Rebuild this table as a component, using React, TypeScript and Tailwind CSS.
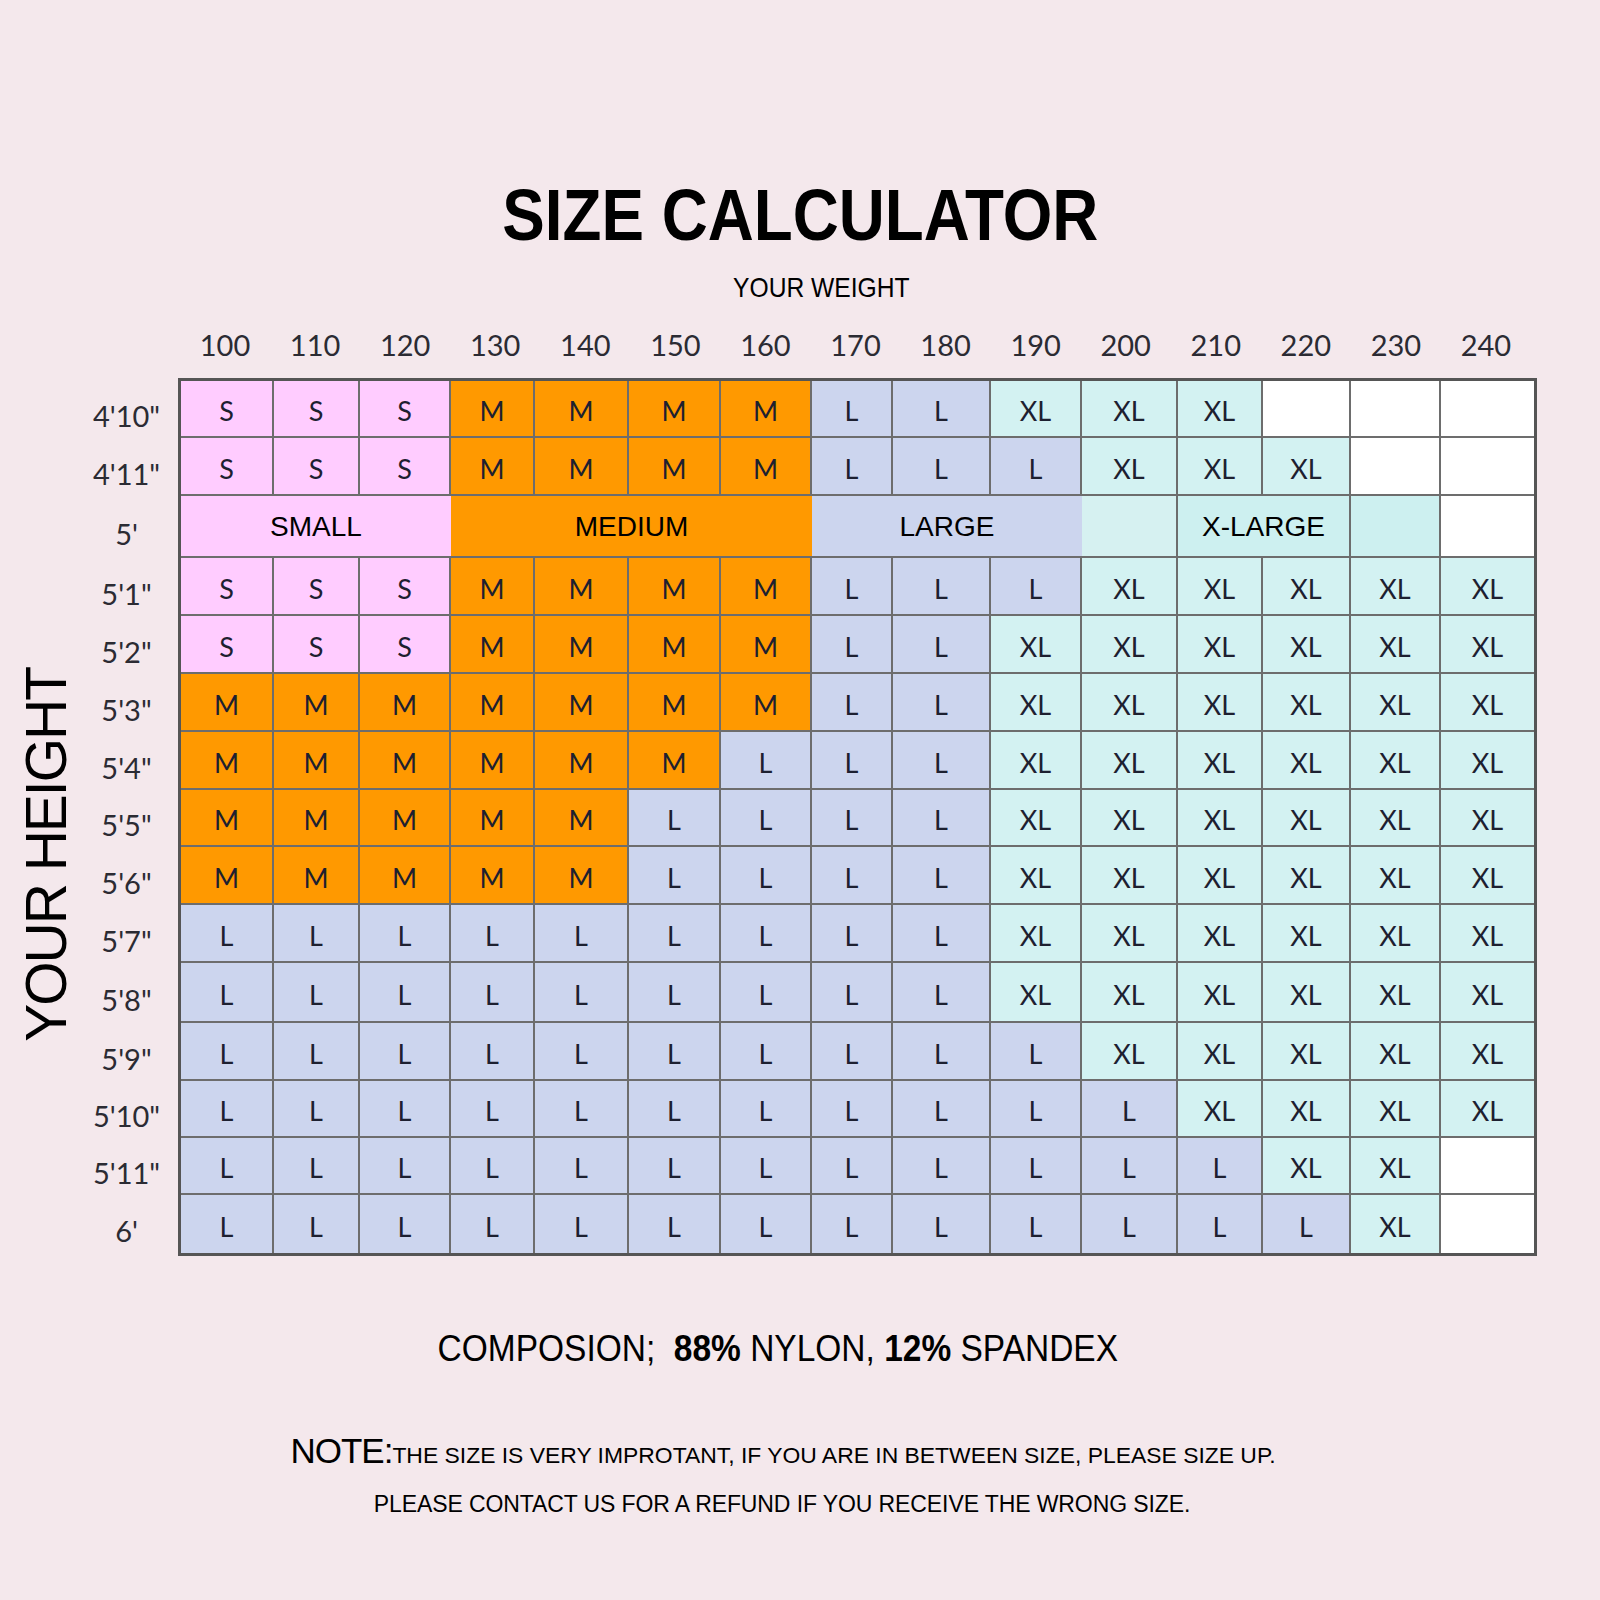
const weights = [100, 110, 120, 130, 140, 150, 160, 170, 180, 190, 200, 210, 220, 230, 240];

// one letter per weight column: S, M, L, X (=XL), _ (empty)
const rows: [string, string | null][] = [
  ["4'10\"", "SSSMMMMLLXXX___"],
  ["4'11\"", "SSSMMMMLLLXXX__"],
  ["5'", null],
  ["5'1\"", "SSSMMMMLLLXXXXX"],
  ["5'2\"", "SSSMMMMLLXXXXXX"],
  ["5'3\"", "MMMMMMMLLXXXXXX"],
  ["5'4\"", "MMMMMMLLLXXXXXX"],
  ["5'5\"", "MMMMMLLLLXXXXXX"],
  ["5'6\"", "MMMMMLLLLXXXXXX"],
  ["5'7\"", "LLLLLLLLLXXXXXX"],
  ["5'8\"", "LLLLLLLLLXXXXXX"],
  ["5'9\"", "LLLLLLLLLLXXXXX"],
  ["5'10\"", "LLLLLLLLLLLXXXX"],
  ["5'11\"", "LLLLLLLLLLLLXX_"],
  ["6'", "LLLLLLLLLLLLLX_"],
];

const fill: Record<string, string> = {
  S: "bg-[#ffccff]",
  M: "bg-[#ff9900]",
  L: "bg-[#ccd5ee]",
  X: "bg-[#d3f2f2]",
  _: "bg-white",
};

const text: Record<string, string> = { S: "S", M: "M", L: "L", X: "XL", _: "" };

const rowTemplate =
  "grid-rows-[57px_58px_62px_58px_58px_58px_58px_57px_58px_58px_60px_58px_57px_57px_58px]";

function BandRow() {
  const band = "flex items-center justify-center border-b-2 border-[#6d6d6d] pt-[2px] text-[28px] leading-none text-black";
  return (
    <>
      <div className={`col-span-3 bg-[#ffccff] ${band}`}>SMALL</div>
      <div className={`col-span-4 bg-[#ff9900] ${band}`}>MEDIUM</div>
      <div className={`col-span-3 bg-[#ccd5ee] ${band}`}>LARGE</div>
      <div className={`border-r-2 bg-[#d6f1f1] ${band}`} />
      <div className={`col-span-2 border-r-2 bg-[#cdf0f0] ${band}`}>X-LARGE</div>
      <div className={`border-r-2 bg-[#cdf0f0] ${band}`} />
      <div className={`bg-white ${band}`} />
    </>
  );
}

function Cell({ code, col, last }: { code: string; col: number; last: boolean }) {
  return (
    <div
      className={`flex items-center justify-center border-[#6d6d6d] pt-[4px] font-['Lato',sans-serif] text-[27px] leading-none text-[#1d2030] ${fill[code]} ${col < 14 ? "border-r-2" : ""} ${last ? "" : "border-b-2"}`}
    >
      {text[code]}
    </div>
  );
}

export default function App() {
  return (
    <div className="min-h-[1600px] w-full bg-[#f4e8ec] pt-[178px] font-['Liberation_Sans',Arial,sans-serif] text-black">
      <h1 className="text-center text-[73px] font-bold leading-none">
        <span className="inline-block scale-x-[0.873]">SIZE CALCULATOR</span>
      </h1>

      <div className="mt-[23px] pl-[42px] text-center text-[28px] leading-none">
        <span className="inline-block scale-x-[0.88]">YOUR WEIGHT</span>
      </div>

      <div className="mt-[28px] flex">
        <div className="w-[180px] shrink-0" />
        <div className="grid w-[1351px] grid-cols-[repeat(15,minmax(0,1fr))] font-['Lato',sans-serif] text-[29px] leading-none text-[#2b2b33]">
          {weights.map((w) => (
            <div key={w} className="text-center">
              {w}
            </div>
          ))}
        </div>
      </div>

      <div className="mt-[19px] flex">
        <div className="flex w-[75px] shrink-0 items-center pl-[18px] pt-[75px]">
          <span className="rotate-180 text-[57px] leading-none tracking-[-2px] [text-orientation:sideways] [writing-mode:vertical-rl]">
            YOUR HEIGHT
          </span>
        </div>

        <div className={`grid w-[103px] shrink-0 pt-[3px] font-['Lato',sans-serif] text-[29px] leading-none text-[#2b2b33] ${rowTemplate}`}>
          {rows.map(([h]) => (
            <div key={h} className="flex items-center justify-center pt-[12px]">
              {h}
            </div>
          ))}
        </div>

        <div
          className={`grid grid-cols-[93px_86px_91px_84px_94px_92px_91px_81px_98px_91px_96px_85px_88px_90px_93px] border-[3px] border-[#555555] ${rowTemplate}`}
        >
          {rows.map(([h, codes], r) =>
            codes === null ? (
              <BandRow key={h} />
            ) : (
              codes.split("").map((c, i) => <Cell key={`${h}-${i}`} code={c} col={i} last={r === rows.length - 1} />)
            )
          )}
        </div>
      </div>

      <div className="mt-[75px] pr-[44px] text-center text-[36px] leading-none">
        <span className="inline-block scale-x-[0.93]">
          COMPOSION;&nbsp; <b>88%</b> NYLON, <b>12%</b> SPANDEX
        </span>
      </div>

      <div className="mt-[66px] flex items-baseline justify-center pr-[34px] leading-none">
        <span className="text-[35px] tracking-[-1px]">NOTE:</span>
        <span className="text-[22.9px]">THE SIZE IS VERY IMPROTANT, IF YOU ARE IN BETWEEN SIZE, PLEASE SIZE UP.</span>
      </div>

      <div className="mt-[25px] pr-[36px] text-center text-[23px] leading-none tracking-[-0.1px]">
        PLEASE CONTACT US FOR A REFUND IF YOU RECEIVE THE WRONG SIZE.
      </div>
    </div>
  );
}
